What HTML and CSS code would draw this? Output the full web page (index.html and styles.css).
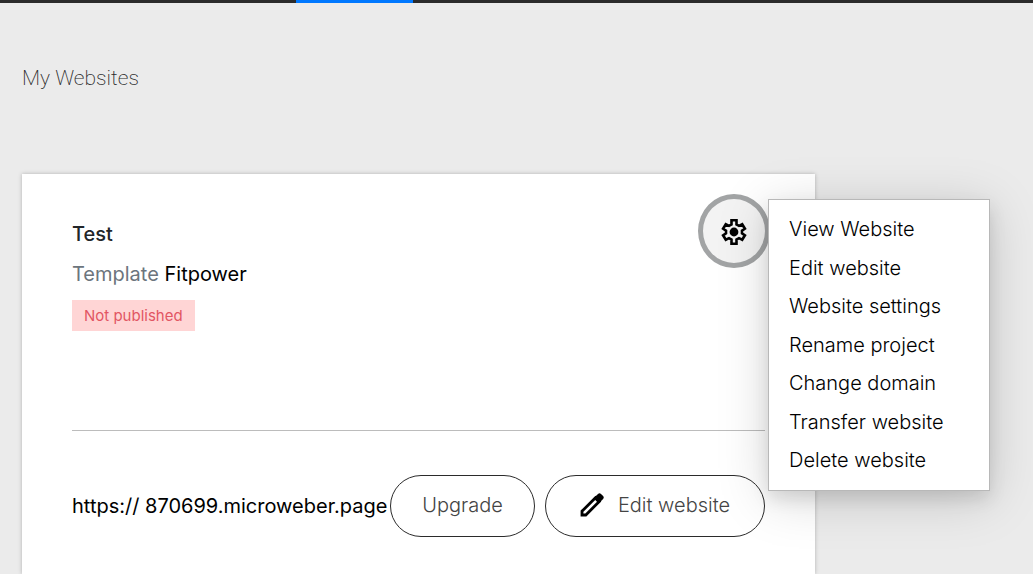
FILE: index.html
```html
<!DOCTYPE html>
<html lang="en">
<head>
<meta charset="utf-8">
<meta name="viewport" content="width=device-width, initial-scale=1">
<title>My Websites</title>
<link rel="stylesheet" href="styles.css">
</head>
<body>
<div class="topbar"><span class="topbar-active"></span></div>
<main class="page">
  <h1 class="page-title">My Websites</h1>
  <div class="projects">
    <article class="card">
      <header class="card-head">
        <div class="card-info">
          <h2 class="card-name">Test</h2>
          <p class="card-template"><span class="muted">Template</span> Fitpower</p>
          <span class="badge">Not published</span>
        </div>
        <div class="settings">
          <button class="gear" type="button" aria-label="Project settings" aria-expanded="true">
            <svg width="26" height="26" viewBox="0 0 26 26" aria-hidden="true"><path d="M10.500 1.300h5v4.200l2.500 1.400 3.200-1.600 2.700 4.400-2.900 1.900v2.800l2.900 1.900-2.700 4.400-3.200-1.600-2.500 1.400v4.200h-5v-4.200L8 19.100l-3.200 1.600-2.700-4.400L5 14.400v-2.800L2.100 9.700l2.700-4.400L8 6.900l2.500-1.400z" fill="none" stroke="#000" stroke-width="2.600"/><circle cx="13" cy="13" r="4.400"/></svg>
          </button>
          <ul class="menu">
            <li><a href="#">View Website</a></li>
            <li><a href="#">Edit website</a></li>
            <li><a href="#">Website settings</a></li>
            <li><a href="#">Rename project</a></li>
            <li><a href="#">Change domain</a></li>
            <li><a href="#">Transfer website</a></li>
            <li><a href="#">Delete website</a></li>
          </ul>
        </div>
      </header>
      <footer class="card-foot">
        <a class="site-url" href="#">https:// 870699.microweber.page</a>
        <button class="pill pill-upgrade" type="button">Upgrade</button>
        <button class="pill pill-edit" type="button">
          <svg width="24" height="24" viewBox="0 0 24 24" aria-hidden="true"><path d="M2 18.200V22h3.800L19.300 8.500l-3.800-3.800z" fill="none" stroke="#000" stroke-width="2.800"/><path d="M13.500 5.300L18 .9q1.500-1.300 3 0l2.100 2.100q1.300 1.500 0 3L18.700 10.500z"/></svg>
          Edit website
        </button>
      </footer>
    </article>
  </div>
</main>
</body>
</html>
```
FILE: styles.css
```css
* { box-sizing: border-box; }

body {
  margin: 0;
  min-height: 100vh;
  display: flex;
  flex-direction: column;
  background: #ebebeb;
  color: #000;
  font: 400 20px/30px Inter, "Liberation Sans", sans-serif;
}

a { color: inherit; text-decoration: none; }

.topbar {
  height: 3px;
  padding-left: 296px;
  background: #2b2b2b;
}

.topbar-active {
  display: block;
  width: 117px;
  height: 3px;
  background: #0078ff;
}

.page {
  flex: 1;
  display: flex;
  flex-direction: column;
  padding: 60px 22px 0;
}

.page-title {
  margin: 0 0 81px;
  color: #2b2b2b;
  font: 200 21px/30px Roboto, sans-serif;
}

.projects {
  flex: 1;
  display: grid;
  grid-template-columns: 793fr 196fr;
}

.card {
  padding: 20px 50px 36px;
  background: #fff;
  box-shadow: 0 0 4px rgba(0, 0, 0, 0.25);
}

.card-head {
  display: flex;
  justify-content: space-between;
  align-items: flex-start;
  min-height: 237px;
  border-bottom: 1px solid #bcbcbc;
}

.card-info { padding-top: 25px; }

.card-name {
  margin: 0 0 10px;
  color: #212529;
  font-size: 20px;
  font-weight: 500;
  line-height: 30px;
}

.card-template { margin: 0 0 11px; }

.muted { color: #6c757d; }

.badge {
  display: block;
  width: fit-content;
  padding: 0 12px;
  background: #ffd5d5;
  color: #e25563;
  font-size: 15px;
  line-height: 31px;
}

.settings {
  position: relative;
  margin-right: -5px;
}

.gear {
  display: grid;
  place-items: center;
  width: 72px;
  height: 74px;
  padding: 2px 0 0;
  border: 5px solid #a2a4a5;
  border-radius: 50%;
  background: #f3f3f3;
}

.menu {
  position: absolute;
  z-index: 1;
  top: 5px;
  left: 70px;
  width: 222px;
  min-height: 292px;
  margin: 0;
  padding: 14px 20px 15px;
  display: flex;
  flex-direction: column;
  justify-content: space-between;
  list-style: none;
  background: #fff;
  border: 1px solid #b8b8b8;
  box-shadow: 0 8px 48px rgba(0, 0, 0, 0.17), 0 8px 16px rgba(0, 0, 0, 0.1);
  font-weight: 300;
  white-space: nowrap;
}

.card-foot {
  display: flex;
  align-items: center;
  gap: 10px;
  padding-top: 44px;
}

.site-url {
  flex: 1;
  margin-right: -8px;
  white-space: nowrap;
}

.pill {
  display: flex;
  align-items: center;
  justify-content: center;
  gap: 14px;
  height: 62px;
  padding: 0 30px 3px;
  border: 1px solid #2b2b2b;
  border-radius: 31px;
  background: #fff;
  color: #444;
  font: 300 20px/30px Inter, "Liberation Sans", sans-serif;
  white-space: nowrap;
}

.pill-upgrade { min-width: 145px; }
.pill-edit { min-width: 220px; }
```
